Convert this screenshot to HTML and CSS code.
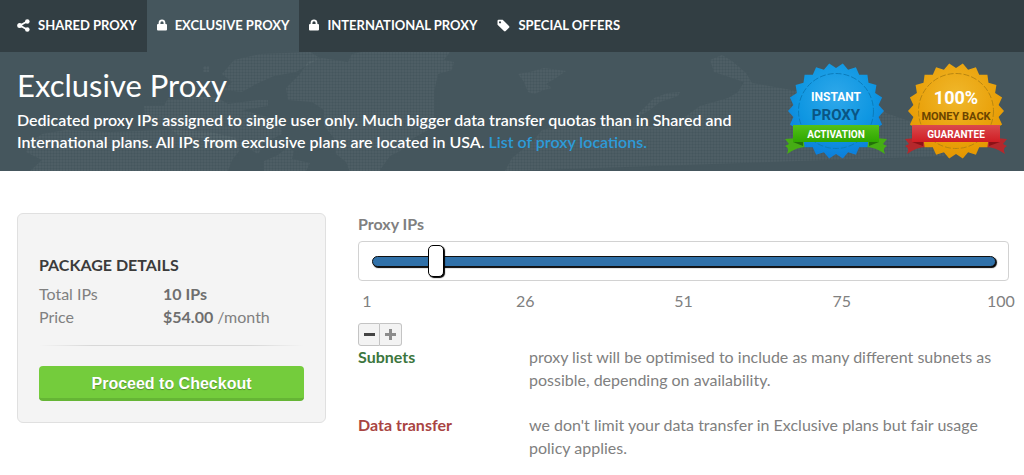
FILE: index.html
```html
<!DOCTYPE html>
<html lang="en">
<head>
    <meta charset="UTF-8">
    <meta name="viewport" content="width=device-width, initial-scale=1.0">
    <title>Exclusive Proxy</title>
    <link rel="stylesheet" href="styles.css">
</head>
<body>
    <nav class="tabs">
        <a class="tab" href="#shared">
            <svg class="tab-icon" width="13" height="13" viewBox="0 0 13 13"><path d="M10 2.5 3 6.5l7 4" fill="none" stroke="currentColor" stroke-width="1.8"/><circle cx="10.3" cy="2.5" r="2.3"/><circle cx="2.7" cy="6.5" r="2.5"/><circle cx="10.3" cy="10.5" r="2.3"/></svg>
            SHARED PROXY
        </a>
        <a class="tab active" href="#exclusive">
            <svg class="tab-icon" width="10" height="12" viewBox="0 0 10 12"><path d="M1.6 5V3.9C1.6 1.7 3 .5 5 .5s3.400 1.200 3.400 3.400V5h.6q1 0 1 1v4.500q0 1-1 1H1q-1 0-1-1V6q0-1 1-1zM3.400 5h3.200V3.900Q6.600 2.200 5 2.200T3.400 3.900z"/></svg>
            EXCLUSIVE PROXY
        </a>
        <a class="tab" href="#international">
            <svg class="tab-icon" width="10" height="12" viewBox="0 0 10 12"><path d="M1.6 5V3.9C1.6 1.7 3 .5 5 .5s3.400 1.200 3.400 3.400V5h.6q1 0 1 1v4.500q0 1-1 1H1q-1 0-1-1V6q0-1 1-1zM3.400 5h3.200V3.900Q6.600 2.200 5 2.200T3.400 3.900z"/></svg>
            INTERNATIONAL PROXY
        </a>
        <a class="tab" href="#offers">
            <svg class="tab-icon" width="13" height="13" viewBox="0 0 13 13"><path fill-rule="evenodd" d="M.5 2q0-1.200 1.200-1.200h4L12 7q.8.900 0 1.800l-3.300 3.300q-.8.800-1.700 0L.5 5.800zM3 2.200a1.100 1.100 0 1 0 .01 0z"/></svg>
            SPECIAL OFFERS
        </a>
    </nav>

    <header class="hero">
        <svg class="map" viewBox="0 0 1024 119" preserveAspectRatio="xMidYMid slice" aria-hidden="true">
            <defs>
                <pattern id="dots" width="3" height="3" patternUnits="userSpaceOnUse">
                    <rect width="2" height="3"/>
                    <rect width="3" height="2"/>
                </pattern>
            </defs>
            <g fill="url(#dots)">
                <path d="M28 92 42 82 66 78 110 80 165 78 210 80 236 86 240 98 232 108 228 119H30L42 108 26 100z"/>
                <path d="M144 54h20l4-8 14 2 10-4 26 2 10 6 30-4h10v6l-26 4 22 6 18 6v12l-16 8-8 12-14-8-22 4-20-12-22-2-14-10-20-2z"/>
                <path d="M203 14h6v6h-6zM222 22l12-14 26-6 50-2 10 6-14 8-10 6-22 4-18 8-14 8-18-2 8-8z"/>
                <path d="M264 119v-10l14-6 10-8 6 4-2 8 18 4-4 8z"/>
                <path d="M286 36l14-14 8-12 14-4 26 4 4-8 10-2h88l-6 8 10 2-2 8-14 4-4 18v24l-6 14-18 10-8 10-12 6-10 14-2 7h-26l-6-15-10-8-2-16-10-12v-16l-12-8-24-2z"/>
                <path d="M518 22l12-2 14-4 22 3-10 7-10 6 6 4-8 2-10 4-6-2-4-10z"/>
                <path d="M505 119l7-13 10-8 12-10 8-10 18-4 20 4 30-4 20-6 10-8 14-14 14-5 12-1-2 4-18 6-10 8-14 8 8 8 26 2 16-12 14-10 28-8 10-6 6-10-30-10-4-12 12-5 10 6 14 12 6 10 34 6 30 6 30-6 24 6 16 18 40 14 46 4 6 6-20 4-14 15z"/>
            </g>
        </svg>
        <div class="hero-text">
            <h1>Exclusive Proxy</h1>
            <p>Dedicated proxy IPs assigned to single user only. Much bigger data transfer quotas than in Shared and International plans. All IPs from exclusive plans are located in USA. <a href="#locations">List of proxy locations.</a></p>
        </div>
        <div class="badges">
            <svg class="badge" viewBox="-52 -52 104 104" role="img" aria-label="Instant proxy activation">
                <defs>
                    <radialGradient id="blue" cy=".35" r=".65">
                        <stop offset="0" stop-color="#2fa8ea"/>
                        <stop offset=".6" stop-color="#0f97e2"/>
                        <stop offset="1" stop-color="#0d7edb"/>
                    </radialGradient>
                    <linearGradient id="green" x2="0" y2="1">
                        <stop offset="0" stop-color="#53c018"/>
                        <stop offset="1" stop-color="#2fa800"/>
                    </linearGradient>
                </defs>
                <path fill="#46ad14" d="M-51 28-28 26v10q-10-1-21 7 3-6-2-8l4-2zM51 28 28 26v10q10-1 21 7-3-6 2-8l-4-2z"/>
                <path fill="url(#blue)" d="M0-43 6.800-47.500 12.100-41.300 19.900-43.700 23.200-36.200 31.400-36.300 32.500-28.200 40.400-25.900 39.100-17.900 46.100-13.500 42.600-6.100 48 0 42.600 6.100 46.100 13.500 39.100 17.900 40.400 25.900 32.500 28.200 31.400 36.300 23.200 36.200 19.900 43.700 12.100 41.300 6.800 47.500 0 43-6.800 47.500-12.100 41.300-19.900 43.700-23.200 36.200-31.400 36.300-32.500 28.200-40.400 25.900-39.100 17.900-46.100 13.500-42.600 6.100-48 0-42.600-6.100-46.100-13.500-39.100-17.900-40.400-25.900-32.500-28.200-31.400-36.300-23.200-36.200-19.900-43.700-12.100-41.300-6.800-47.500z"/>
                <circle r="37.500" fill="none" stroke="#0a7cbc" stroke-dasharray="6 2"/>
                <path fill="#23720a" d="M-43 31h10v4zM43 31H33v4z"/>
                <path fill="url(#green)" d="M-43 14h86v17h-86z"/>
                <text class="badge-top" y="-10">INSTANT</text>
                <text class="badge-mid" y="9" fill="#0a5583">PROXY</text>
                <text class="badge-ribbon" y="27">ACTIVATION</text>
            </svg>
            <svg class="badge" viewBox="-52 -52 104 104" role="img" aria-label="100% money back guarantee">
                <defs>
                    <radialGradient id="gold" cy=".35" r=".65">
                        <stop offset="0" stop-color="#f0b82c"/>
                        <stop offset=".6" stop-color="#eaa30d"/>
                        <stop offset="1" stop-color="#e59700"/>
                    </radialGradient>
                    <linearGradient id="red" x2="0" y2="1">
                        <stop offset="0" stop-color="#d94a4c"/>
                        <stop offset="1" stop-color="#d11d24"/>
                    </linearGradient>
                </defs>
                <path fill="#b5282c" d="M-51 28-28 26v10q-10-1-21 7 3-6-2-8l4-2zM51 28 28 26v10q10-1 21 7-3-6 2-8l-4-2z"/>
                <path fill="url(#gold)" d="M0-43 6.800-47.500 12.100-41.300 19.900-43.700 23.200-36.200 31.400-36.300 32.500-28.200 40.400-25.900 39.100-17.900 46.100-13.500 42.600-6.100 48 0 42.600 6.100 46.100 13.500 39.100 17.900 40.400 25.900 32.500 28.200 31.400 36.300 23.200 36.200 19.900 43.700 12.100 41.300 6.800 47.500 0 43-6.800 47.500-12.100 41.300-19.900 43.700-23.200 36.200-31.400 36.300-32.500 28.200-40.400 25.900-39.100 17.900-46.100 13.500-42.600 6.100-48 0-42.600-6.100-46.100-13.500-39.100-17.900-40.400-25.900-32.500-28.200-31.400-36.300-23.200-36.200-19.900-43.700-12.100-41.300-6.800-47.500z"/>
                <circle r="37.500" fill="none" stroke="#b98610" stroke-dasharray="6 2"/>
                <path fill="#8d1217" d="M-44 31h11v4zM44 31H33v4z"/>
                <path fill="url(#red)" d="M-44 14h88v17h-88z"/>
                <text class="badge-top wide" y="-7">100%</text>
                <text class="badge-mid small" y="9" fill="#6b4500">MONEY BACK</text>
                <text class="badge-ribbon" y="27">GUARANTEE</text>
            </svg>
        </div>
    </header>

    <main class="content">
        <section class="package">
            <h2>PACKAGE DETAILS</h2>
            <dl class="details">
                <dt>Total IPs</dt>
                <dd><strong>10 IPs</strong></dd>
                <dt>Price</dt>
                <dd><strong>$54.00</strong> /month</dd>
            </dl>
            <hr class="divider">
            <button class="checkout" type="button">Proceed to Checkout</button>
        </section>

        <section class="options">
            <label class="slider-label" for="ips">Proxy IPs</label>
            <div class="slider-box">
                <input class="slider" id="ips" type="range" min="1" max="100" value="10">
            </div>
            <div class="scale">
                <span>1</span>
                <span>26</span>
                <span>51</span>
                <span>75</span>
                <span>100</span>
            </div>
            <div class="stepper">
                <button type="button" aria-label="Fewer IPs"><svg width="11" height="11" viewBox="0 0 11 11"><path d="M0 4h11v3H0z"/></svg></button>
                <button class="plus" type="button" aria-label="More IPs"><svg width="11" height="11" viewBox="0 0 11 11"><path d="M4 0h3v4h4v3H7v4H4V7H0V4h4z"/></svg></button>
            </div>
            <dl class="notes">
                <dt class="good">Subnets</dt>
                <dd>proxy list will be optimised to include as many different subnets as possible, depending on availability.</dd>
                <dt class="bad">Data transfer</dt>
                <dd>we don't limit your data transfer in Exclusive plans but fair usage policy applies.</dd>
            </dl>
        </section>
    </main>

    <script>
        const slider = document.getElementById('ips');
        const buttons = document.querySelectorAll('.stepper button');

        buttons[0].addEventListener('click', () => slider.stepDown());
        buttons[1].addEventListener('click', () => slider.stepUp());
    </script>
</body>
</html>
```
FILE: styles.css
```css
:root {
    --dark: #323e43;
    --slate: #45565d;
    --text: #808080;
    --line: #d2d2d2;
    --green: #74cc3c;
}

* {
    box-sizing: border-box;
}

body {
    margin: 0;
    background: #fff;
    color: var(--text);
    font-family: Lato, 'Liberation Sans', sans-serif;
    font-size: 16px;
    line-height: 23px;
}

h1, h2, p, dl, dd {
    margin: 0;
}

/* Top tabs */
.tabs {
    display: flex;
    height: 52px;
    padding: 0 7px 2px;
    background: var(--dark);
}

.tab {
    display: flex;
    align-items: center;
    gap: 8px;
    height: 52px;
    padding: 0 10px 2px;
    color: #fff;
    font-size: 13px;
    font-weight: 700;
    text-decoration: none;
    white-space: nowrap;
}

.tab.active {
    background: var(--slate);
}

.tab-icon {
    fill: currentColor;
}

/* Hero */
.hero {
    position: relative;
    display: flex;
    justify-content: space-between;
    padding: 7px 16px 8px 17px;
    background: var(--slate);
    color: #fff;
}

.map {
    position: absolute;
    inset: 0;
    width: 100%;
    height: 100%;
    fill: #fff;
}

#dots rect {
    fill: #fff;
    opacity: 0.025;
}

.hero-text {
    position: relative;
    max-width: 730px;
    padding-top: 8px;
}

.hero h1 {
    margin-bottom: 6px;
    font-size: 31px;
    font-weight: 400;
    line-height: 36px;
}

.hero p {
    font-weight: 600;
    line-height: 22px;
}

.hero p a {
    color: #2d9bd8;
    text-decoration: none;
}

.badges {
    position: relative;
    display: flex;
    gap: 16px;
}

.badge {
    width: 104px;
    height: 104px;
}

.badge text {
    font-family: Roboto, sans-serif;
    font-weight: 700;
    text-anchor: middle;
}

.badge-top {
    fill: #fff;
    font-size: 12px;
}

.badge-top.wide {
    font-size: 18px;
}

.badge-mid {
    font-size: 15px;
}

.badge-mid.small {
    font-size: 11px;
}

.badge-ribbon {
    fill: #fff;
    font-size: 10px;
}

/* Plan */
.content {
    display: flex;
    align-items: flex-start;
    gap: 32px;
    padding: 42px 15px 16px 17px;
}

.package {
    flex: 0 0 309px;
    padding: 39px 21px 21px;
    background: #f4f4f4;
    border: 1px solid #e0e0e0;
    border-radius: 6px;
}

.package h2 {
    margin-bottom: 6px;
    color: #3b3b3b;
    font-size: 16px;
    font-weight: 700;
    line-height: 23px;
}

.details {
    display: grid;
    grid-template-columns: 124px 1fr;
}

.details strong {
    color: #6e6e6e;
}

.divider {
    height: 1px;
    margin: 17px 0 20px;
    border: 0;
    background: linear-gradient(90deg, transparent, #d8d8d8 20%, #d8d8d8 80%, transparent);
}

.checkout {
    display: block;
    width: 100%;
    height: 35px;
    padding: 3px 0 0;
    border: 0;
    border-bottom: 3px solid #65b535;
    border-radius: 4px;
    background: var(--green);
    color: #fff;
    font: 700 16px 'Liberation Sans', Arial, sans-serif;
    text-shadow: 0 1px 1px rgba(0, 0, 0, 0.3);
    cursor: pointer;
}

.options {
    flex: 1;
}

.slider-label {
    display: block;
    margin-bottom: 6px;
    font-weight: 700;
    line-height: 22px;
}

.slider-box {
    display: flex;
    align-items: center;
    height: 40px;
    padding: 0 12px 0 13px;
    border: 1px solid var(--line);
    border-radius: 4px;
}

.slider {
    flex: 1;
    height: 32px;
    margin: 0;
    background: none;
    appearance: none;
    -webkit-appearance: none;
}

.slider::-webkit-slider-runnable-track {
    height: 11px;
    border: 1px solid #111;
    border-radius: 6px;
    background: #3071a9;
    box-shadow: 1px 1px 1px #000;
}

.slider::-webkit-slider-thumb {
    width: 16px;
    height: 32px;
    margin-top: -12px;
    border: 1px solid #000;
    border-radius: 5px;
    background: #fff;
    box-shadow: 1px 1px 1px #000;
    appearance: none;
    -webkit-appearance: none;
}

.scale {
    display: flex;
    justify-content: space-between;
    margin: 8px -4px 11px;
}

.scale span {
    width: 26px;
    text-align: center;
}

.stepper {
    display: flex;
}

.stepper button {
    display: flex;
    align-items: center;
    justify-content: center;
    width: 22px;
    height: 23px;
    padding: 0;
    border: 1px solid #c4c4c4;
    border-radius: 3px 0 0 3px;
    background: #f3f3f3;
    fill: #444;
}

.stepper .plus {
    border-left: 0;
    border-radius: 0 3px 3px 0;
    fill: #8c8c8c;
}

.notes {
    display: grid;
    grid-template-columns: 171px 1fr;
    row-gap: 22px;
    margin-top: -1px;
}

.notes dt {
    font-weight: 700;
}

.good {
    color: #3c763d;
}

.bad {
    color: #a94442;
}
```
